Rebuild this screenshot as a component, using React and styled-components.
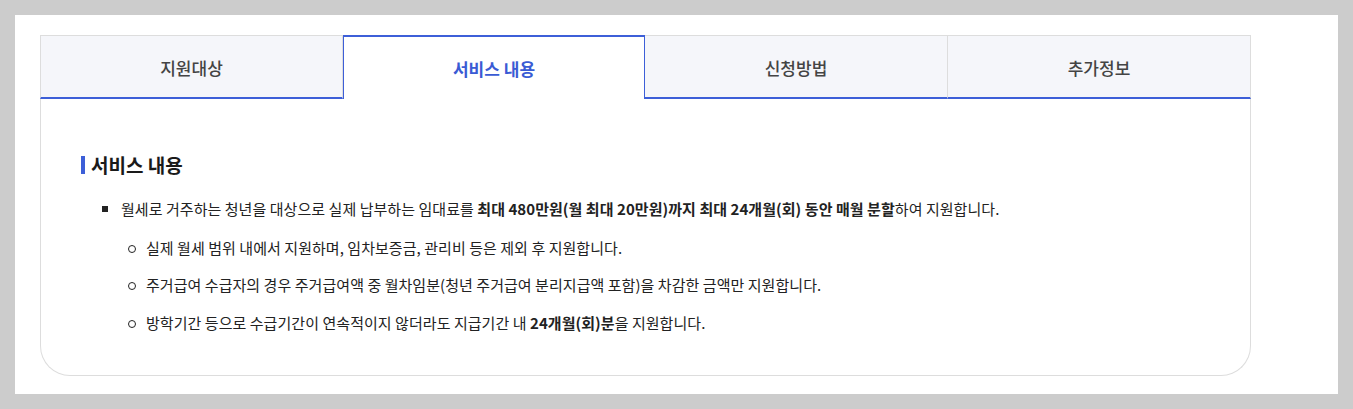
import React from 'react';
import styled, { createGlobalStyle } from 'styled-components';

const GlobalStyle = createGlobalStyle`
  * { box-sizing: border-box; }
  body {
    margin: 0;
    background: #cccccc;
    font-family: "Noto Sans CJK KR", "Noto Sans", sans-serif;
    color: #222;
  }
`;

const tabs = ['지원대상', '서비스 내용', '신청방법', '추가정보'];

const App = () => {
    const active = 1;
    return (
        <>
            <GlobalStyle />
            <Panel>
                <Card>
                    <TabList>
                        {tabs.map((t, i) => (
                            <Tab key={t} $active={i === active}>{t}</Tab>
                        ))}
                    </TabList>
                    <Body>
                        <Heading>서비스 내용</Heading>
                        <List>
                            <Item>
                                월세로 거주하는 청년을 대상으로 실제 납부하는 임대료를 <b>최대 480만원(월 최대 20만원)까지 최대 24개월(회) 동안 매월 분할</b>하여 지원합니다.
                                <SubList>
                                    <SubItem>실제 월세 범위 내에서 지원하며, 임차보증금, 관리비 등은 제외 후 지원합니다.</SubItem>
                                    <SubItem>주거급여 수급자의 경우 주거급여액 중 월차임분(청년 주거급여 분리지급액 포함)을 차감한 금액만 지원합니다.</SubItem>
                                    <SubItem>방학기간 등으로 수급기간이 연속적이지 않더라도 지급기간 내 <b>24개월(회)분</b>을 지원합니다.</SubItem>
                                </SubList>
                            </Item>
                        </List>
                    </Body>
                </Card>
            </Panel>
        </>
    )
}

export default App;

const Panel = styled.div`
    margin: 15px;
    height: 379px;
    background: #fff;
    padding: 20px 25px;
`

const Card = styled.div`
    width: 1211px;
`

const TabList = styled.div`
    display: grid;
    grid-template-columns: 303px 302px 303px 303px;
    height: 64px;
`

const Tab = styled.div`
    display: flex;
    align-items: center;
    justify-content: center;
    font-size: 17px;
    font-weight: ${p => p.$active ? 700 : 500};
    color: ${p => p.$active ? '#3a5bd4' : '#444'};
    background: ${p => p.$active ? '#fff' : '#f5f6fa'};
    border: 1px solid ${p => p.$active ? '#3d5fd8' : '#dddddd'};
    border-top-width: ${p => p.$active ? '2px' : '1px'};
    border-bottom: ${p => p.$active ? 'none' : '2px solid #3d5fd8'};
    border-left-width: ${p => p.$active ? '1px' : '0'};
    padding-top: ${p => p.$active ? '0' : '1px'};
    &:first-child { border-left-width: 1px; }
    ${p => p.$active ? '& + div { border-left-width: 0; }' : ''}
`

const Body = styled.div`
    height: 277px;
    border: 1px solid #dddddd;
    border-top: none;
    border-radius: 0 0 30px 30px;
    padding: 55px 40px 0;
`

const Heading = styled.h3`
    margin: 0 0 22px;
    display: flex;
    align-items: center;
    gap: 6px;
    font-size: 19px;
    font-weight: 700;
    line-height: 22px;
    color: #1a1a1a;
    &::before {
        content: '';
        width: 4px;
        height: 18px;
        background: #3d5fd8;
    }
`

const List = styled.ul`
    margin: 0;
    padding: 0 0 0 21px;
    list-style: none;
`

const Item = styled.li`
    position: relative;
    padding-left: 19px;
    font-size: 15px;
    line-height: 22.5px;
    letter-spacing: 0.05px;
    color: #222;
    &::before {
        content: '';
        position: absolute;
        left: 0;
        top: 8px;
        width: 6px;
        height: 6px;
        background: #222;
    }
    b { font-weight: 700; }
`

const SubList = styled.ul`
    margin: 16px 0 0;
    padding: 0 0 0 7px;
    list-style: none;
    display: flex;
    flex-direction: column;
    gap: 15px;
`

const SubItem = styled.li`
    position: relative;
    padding-left: 18px;
    &::before {
        content: '';
        position: absolute;
        left: 0;
        top: 8px;
        width: 6px;
        height: 6px;
        border: 1px solid #222;
        border-radius: 50%;
    }
`
